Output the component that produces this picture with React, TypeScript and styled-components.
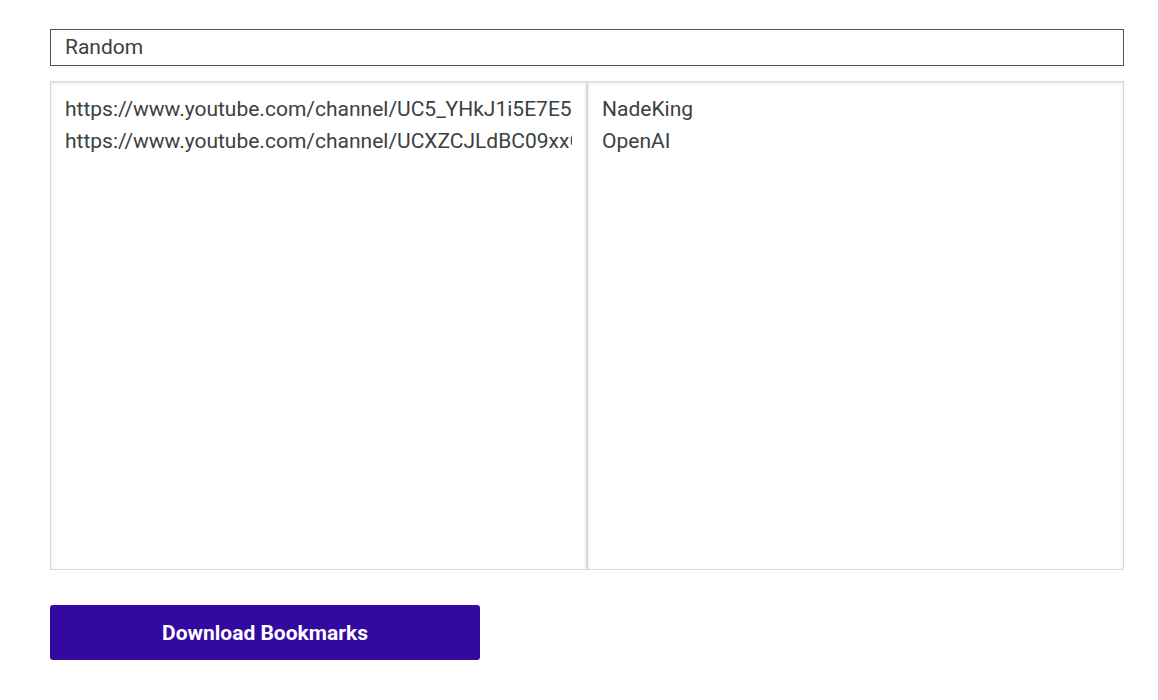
import { FC, useState } from "react";
import styled, { createGlobalStyle } from "styled-components";

const GlobalStyle = createGlobalStyle`
  body {
    margin: 0;
    background: #fff;
    font-family: Roboto, "Liberation Sans", sans-serif;
  }
`;

const Page = styled.div`
  display: flex;
  flex-direction: column;
  padding: 29px 34px 0 50px;
  width: 1074px;
`;

const NameInput = styled.input`
  box-sizing: border-box;
  height: 37px;
  width: 100%;
  padding: 0 14px 2px;
  border: 1px solid #555;
  border-radius: 0;
  font-family: Roboto, "Liberation Sans", sans-serif;
  font-size: 21px;
  color: #3c4043;
  outline: none;
  caret-color: #3c4043;
`;

const Columns = styled.div`
  display: flex;
  margin-top: 15px;
  height: 489px;
`;

const AreaBox = styled.div`
  box-sizing: border-box;
  flex: 1;
  display: flex;
  padding: 11px 14px;
  border: 1px solid #d9d9d9;
  box-shadow: inset 0 1px 3px rgba(0, 0, 0, 0.12);
`;

const Area = styled.textarea`
  flex: 1;
  min-width: 0;
  margin: 0;
  padding: 0;
  border: none;
  background: transparent;
  resize: none;
  white-space: pre;
  overflow: hidden;
  font-family: Roboto, "Liberation Sans", sans-serif;
  font-size: 21px;
  line-height: 32px;
  color: #3c4043;
  outline: none;
`;

const DownloadButton = styled.button`
  margin-top: 35px;
  width: 430px;
  height: 55px;
  border: none;
  border-radius: 3px;
  background: #3309a0;
  color: #fff;
  font-family: Roboto, "Liberation Sans", sans-serif;
  font-size: 21px;
  font-weight: 700;
  cursor: pointer;
`;

const App: FC = () => {
  const [name, setName] = useState("Random");
  const [urls, setUrls] = useState(
    "https://www.youtube.com/channel/UC5_YHkJ1i5E7E5QV6fY1xnw\nhttps://www.youtube.com/channel/UCXZCJLdBC09xxGZ6gcdrc6A"
  );
  const [titles, setTitles] = useState("NadeKing\nOpenAI");

  return (
    <>
      <GlobalStyle />
      <Page>
        <NameInput value={name} onChange={(e) => setName(e.target.value)} autoFocus />
        <Columns>
          <AreaBox>
            <Area value={urls} onChange={(e) => setUrls(e.target.value)} />
          </AreaBox>
          <AreaBox>
            <Area value={titles} onChange={(e) => setTitles(e.target.value)} />
          </AreaBox>
        </Columns>
        <DownloadButton>Download Bookmarks</DownloadButton>
      </Page>
    </>
  );
};

export default App;
